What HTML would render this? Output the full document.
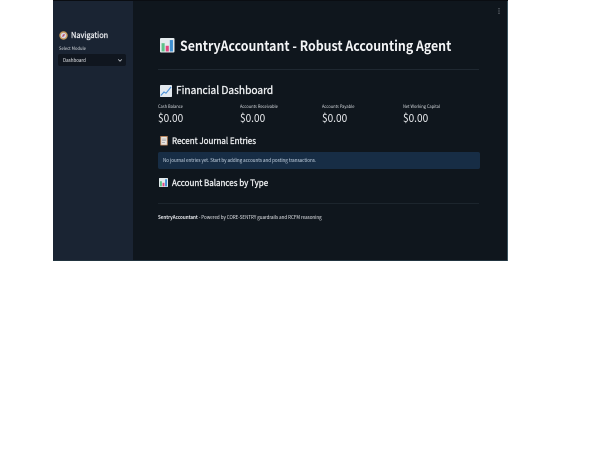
<!DOCTYPE html>
<html><head><meta charset="utf-8"><style>
html,body{margin:0;padding:0;background:#fff}
body{width:600px;height:451px;overflow:hidden;position:relative;font-family:"Noto Sans CJK SC","Liberation Sans",sans-serif}
.a{position:absolute;white-space:nowrap;line-height:1;transform-origin:0 50%}
.h{font-weight:400;-webkit-text-stroke:.32px currentColor}
svg{position:absolute;display:block}
</style></head><body>
<div class="a" style="left:53px;top:0;width:454.5px;height:261px;background:#0f161d"></div>
<div class="a" style="left:53px;top:0;width:80px;height:261px;background:#1a2433"></div>
<div class="a" style="left:53px;top:260px;width:455px;height:1px;background:#22343f"></div>
<div class="a" style="left:507px;top:0;width:1px;height:261px;background:#3d5560"></div>
<div class="a" style="left:53px;top:0;width:455px;height:1px;background:#0a0d12"></div>

<svg style="left:59px;top:31px" width="9" height="9" viewBox="0 0 9 9"><circle cx="4.5" cy="4.5" r="4.2" fill="#c79a5b"/><circle cx="4.5" cy="4.5" r="2.8" fill="#d8d6e2"/><path d="M3 6l1-2.5L6 3 5 5.2z" fill="#b5476a"/></svg>
<div class="a h" style="left:70.5px;top:30px;font-size:8.2px;line-height:11px;color:#e6e8ec;transform:scaleX(.9)">Navigation</div>
<div class="a" style="left:58.5px;top:46px;font-size:4.5px;line-height:6px;color:#d4d8dd;transform:scaleX(.91)">Select Module</div>
<div class="a" style="left:58px;top:54px;width:68px;height:12px;background:#10161f;border-radius:2px"></div>
<div class="a" style="left:63px;top:57.5px;font-size:4.9px;line-height:6px;color:#e4e6ea;transform:scaleX(.92)">Dashboard</div>
<svg style="left:117px;top:57.5px" width="6" height="5" viewBox="0 0 6 5"><path d="M1.2 1.4L3 3.2 4.8 1.4" fill="none" stroke="#c8ccd2" stroke-width=".8"/></svg>

<svg style="left:497.5px;top:8px" width="2" height="6" viewBox="0 0 2 6"><circle cx="1" cy=".8" r=".55" fill="#a8adb3"/><circle cx="1" cy="3" r=".55" fill="#a8adb3"/><circle cx="1" cy="5.2" r=".55" fill="#a8adb3"/></svg>

<svg style="left:160px;top:38px" width="14.5" height="14.5" viewBox="0 0 14 14"><rect width="14" height="14" rx="1" fill="#e4ebee"/><rect x="1.5" y="5" width="3" height="8" fill="#5ec28a"/><rect x="5.5" y="7.5" width="3" height="5.5" fill="#e2457f"/><rect x="9.5" y="2" width="3" height="11" fill="#3f8fd0"/></svg>
<div class="a" style="left:179.5px;top:36.5px;font-size:13.9px;line-height:18px;font-weight:700;color:#f3f4f6;transform:scaleX(.888)">SentryAccountant - Robust Accounting Agent</div>
<div class="a" style="left:158px;top:69px;width:321px;height:1px;background:#1f2831"></div>

<svg style="left:160px;top:85px" width="12" height="12" viewBox="0 0 12 12"><rect width="12" height="12" rx=".8" fill="#e2e8ee"/><path d="M.8 10.5L4 7l2 1.2L11 2" fill="none" stroke="#4a8fd6" stroke-width="1.1"/></svg>
<div class="a h" style="left:175.5px;top:84px;font-size:10.6px;line-height:14px;color:#eff1f3;transform:scaleX(.96)">Financial Dashboard</div>

<div class="a" style="left:158px;top:103.5px;font-size:4.4px;line-height:6px;color:#d4d8dd;transform:scaleX(.91)">Cash Balance</div>
<div class="a" style="left:239.5px;top:103.5px;font-size:4.4px;line-height:6px;color:#d4d8dd;transform:scaleX(.91)">Accounts Receivable</div>
<div class="a" style="left:321.5px;top:103.5px;font-size:4.4px;line-height:6px;color:#d4d8dd;transform:scaleX(.91)">Accounts Payable</div>
<div class="a" style="left:403px;top:103.5px;font-size:4.4px;line-height:6px;color:#d4d8dd;transform:scaleX(.91)">Net Working Capital</div>
<div class="a" style="left:158px;top:111px;font-size:11.2px;line-height:15px;color:#e8eaed;transform:scaleX(.9)">$0.00</div>
<div class="a" style="left:239.5px;top:111px;font-size:11.2px;line-height:15px;color:#e8eaed;transform:scaleX(.9)">$0.00</div>
<div class="a" style="left:321.5px;top:111px;font-size:11.2px;line-height:15px;color:#e8eaed;transform:scaleX(.9)">$0.00</div>
<div class="a" style="left:403px;top:111px;font-size:11.2px;line-height:15px;color:#e8eaed;transform:scaleX(.9)">$0.00</div>

<svg style="left:160px;top:136px" width="8" height="9.5" viewBox="0 0 8 10"><rect width="8" height="10" rx=".6" fill="#b5825a"/><rect x="1" y="1" width="6" height="8.2" fill="#e8e4e0"/><path d="M2 3.2h4M2 5h4M2 6.8h3" stroke="#8a8f98" stroke-width=".6"/></svg>
<div class="a h" style="left:171.5px;top:135px;font-size:8.7px;line-height:12px;color:#eceef0;transform:scaleX(.92)">Recent Journal Entries</div>

<div class="a" style="left:158px;top:152px;width:321.5px;height:17px;background:#172d45;border-radius:2px"></div>
<div class="a" style="left:163px;top:157px;font-size:4.9px;line-height:7px;color:#c9d7e6;transform:scaleX(.92)">No journal entries yet. Start by adding accounts and posting transactions.</div>

<svg style="left:159px;top:178px" width="9" height="9" viewBox="0 0 14 14"><rect width="14" height="14" rx="1" fill="#e4ebee"/><rect x="1.5" y="5" width="3" height="8" fill="#5ec28a"/><rect x="5.5" y="7.5" width="3" height="5.5" fill="#e2457f"/><rect x="9.5" y="2" width="3" height="11" fill="#3f8fd0"/></svg>
<div class="a h" style="left:171.5px;top:177px;font-size:8.7px;line-height:12px;color:#eceef0;transform:scaleX(.92)">Account Balances by Type</div>

<div class="a" style="left:158px;top:203px;width:321px;height:1px;background:#1c252d"></div>
<div class="a" style="left:158px;top:214px;font-size:4.9px;line-height:7px;color:#e4e6ea;transform:scaleX(.915)"><b style="font-weight:700">SentryAccountant</b> - Powered by CORE-SENTRY guardrails and RCFM reasoning</div>
</body></html>
